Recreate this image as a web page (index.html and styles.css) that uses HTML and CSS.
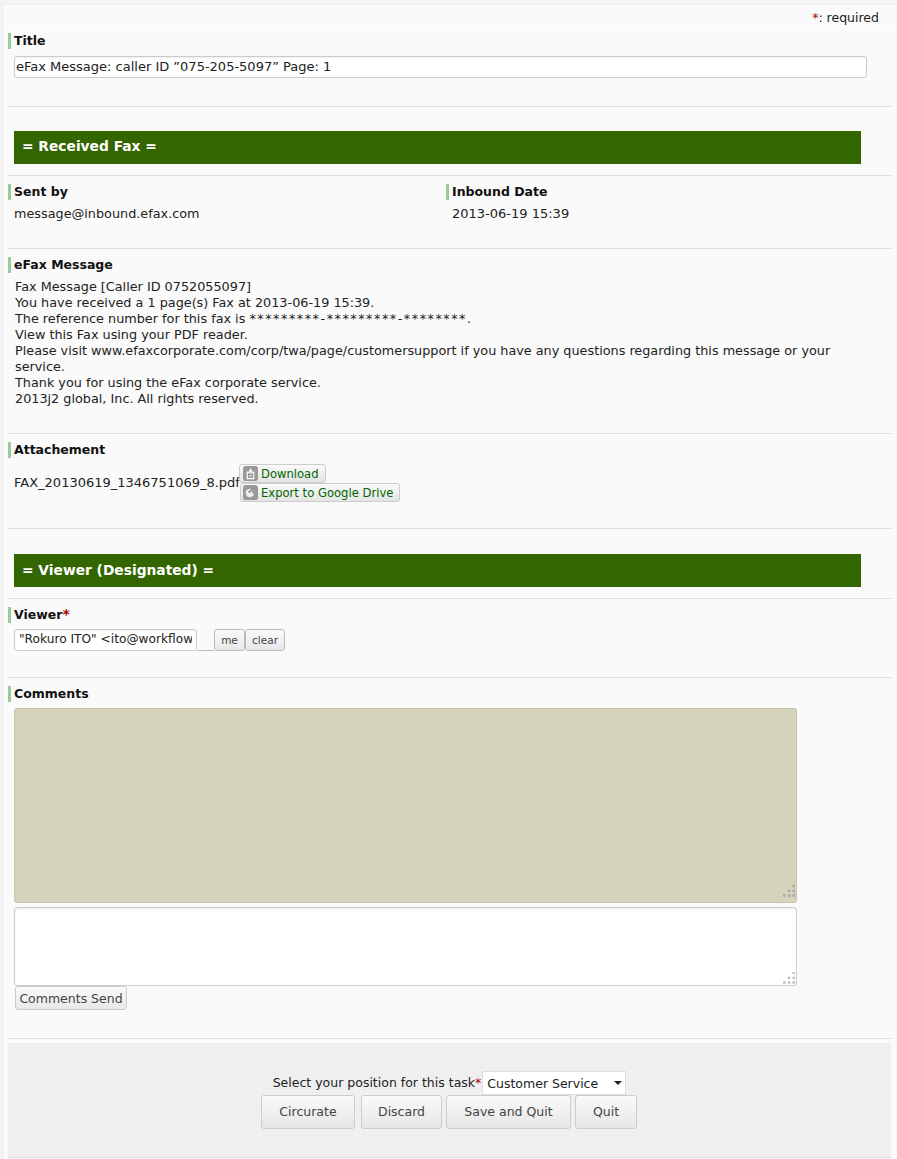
FILE: index.html
```html
<!DOCTYPE html>
<html lang="en">
<head>
  <meta charset="UTF-8" />
  <meta name="viewport" content="width=device-width, initial-scale=1.0"/>
  <title>eFax Message</title>
  <link rel="stylesheet" href="styles.css">
</head>
<body>
  <div class="page">
    <div class="required-note"><span class="req">*</span>: required</div>

    <div class="row row-title">
      <div class="label">Title</div>
      <input class="text-input title-input" type="text" value="eFax Message: caller ID ”075-205-5097” Page: 1" />
    </div>

    <div class="row row-heading">
      <div class="heading">= Received Fax =</div>
    </div>

    <div class="row row-sender">
      <div class="col">
        <div class="label">Sent by</div>
        <div class="value">message@inbound.efax.com</div>
      </div>
      <div class="col">
        <div class="label">Inbound Date</div>
        <div class="value date-value">2013-06-19 15:39</div>
      </div>
    </div>

    <div class="row row-message">
      <div class="label">eFax Message</div>
      <div class="message">
        Fax Message [Caller ID 0752055097]<br>
        You have received a 1 page(s) Fax at 2013-06-19 15:39.<br>
        The reference number for this fax is <span class="stars">*********-*********-********.</span><br>
        View this Fax using your PDF reader.<br>
        Please visit www.efaxcorporate.com/corp/twa/page/customersupport if you have any questions regarding this message or your service.<br>
        Thank you for using the eFax corporate service.<br>
        2013j2 global, Inc. All rights reserved.
      </div>
    </div>

    <div class="row row-attach">
      <div class="label">Attachement</div>
      <div class="attach">
        <span class="file-name">FAX_20130619_1346751069_8.pdf</span>
        <div class="attach-buttons">
          <a class="file-btn">
            <svg class="file-icon" viewBox="0 0 16 16"><rect width="16" height="16" rx="3" fill="#999"/><path d="M8 2.500v3M6.500 4.500L8 6l1.500-1.500" fill="none" stroke="#fff" stroke-width="1.200"/><path d="M4.500 6.500h2v1h3v-1h2v7h-7z" fill="none" stroke="#fff" stroke-width="1.200"/><path d="M6.500 10.500h3" stroke="#fff"/></svg>
            Download
          </a>
          <a class="file-btn btn-drive">
            <svg class="file-icon" viewBox="0 0 16 16"><rect width="16" height="16" rx="3" fill="#999"/><path d="M3 6.500c2-2.500 5-3 8-2L9 8l3 1.500c-1 2.500-3 3.500-5 3.500-2.500 0-4-2-4-4.500z" fill="#eee"/><path d="M6 8l5-4.500" stroke="#777" stroke-width="1.500"/></svg>
            Export to Google Drive
          </a>
        </div>
      </div>
    </div>

    <div class="row row-heading row-heading-viewer">
      <div class="heading">= Viewer (Designated) =</div>
    </div>

    <div class="row row-viewer">
      <div class="label">Viewer<span class="req">*</span></div>
      <div class="viewer">
        <input class="text-input viewer-input" type="text" value="&quot;Rokuro ITO&quot; &lt;ito@workflow-sample.com&gt;" />
        <span class="viewer-blank"></span>
        <button class="small-btn btn-me">me</button>
        <button class="small-btn btn-clear">clear</button>
      </div>
    </div>

    <div class="row row-comments">
      <div class="label">Comments</div>
      <div class="area-wrap">
        <textarea class="area area-log" readonly></textarea>
        <svg class="grip" viewBox="0 0 12 12"><path d="M9 0h2v2H9zM5 4h2v2H5zM9 4h2v2H9zM1 8h2v2H1zM5 8h2v2H5zM9 8h2v2H9z" fill="#a5a5a0"/></svg>
      </div>
      <div class="area-wrap">
        <textarea class="area area-new"></textarea>
        <svg class="grip" viewBox="0 0 12 12"><path d="M9 0h2v2H9zM5 4h2v2H5zM9 4h2v2H9zM1 8h2v2H1zM5 8h2v2H5zM9 8h2v2H9z" fill="#bbb"/></svg>
      </div>
      <button class="send-btn">Comments Send</button>
    </div>

    <div class="footer">
      <div class="position">
        Select your position for this task<span class="req">*</span><span class="select-wrap"><select class="position-select"><option>Customer Service</option></select></span>
      </div>
      <div class="actions">
        <button class="action-btn btn-circulate">Circurate</button>
        <button class="action-btn btn-discard">Discard</button>
        <button class="action-btn btn-save">Save and Quit</button>
        <button class="action-btn btn-quit">Quit</button>
      </div>
    </div>
  </div>
</body>
</html>
```

FILE: styles.css
```css
html, body {
  margin: 0;
  padding: 0;
}

body {
  background: #f4f4f4;
  color: #222;
  font-family: "DejaVu Sans", Verdana, sans-serif;
  font-size: 12.5px;
  line-height: 16px;
  padding: 4px 0 0 2px;
  height: 1159px;
  overflow: hidden;
  box-sizing: border-box;
}

.page {
  background: #fafafa;
  border-top: 1px solid #eee;
  border-left: 1px solid #eee;
  padding: 0 6px 0 5px;
  height: 1154px;
}

.req {
  color: #a00;
}

.required-note {
  height: 22px;
  padding: 5px 12px 0 0;
  box-sizing: border-box;
  text-align: right;
  border-bottom: 1px solid #fff;
  line-height: 16px;
}

.row {
  border-bottom: 1px solid #ddd;
  box-sizing: border-box;
}

.label {
  border-left: 3px solid #99cc99;
  padding-left: 3px;
  height: 16px;
  font-weight: bold;
  color: #111;
}

.label .req {
  font-size: 14px;
  line-height: 0;
}

.row-title {
  height: 80px;
  padding-top: 6px;
}

.text-input {
  font-family: inherit;
  font-size: inherit;
  color: #222;
  background: #fff;
  border: 1px solid #ccc;
  border-radius: 3px;
  box-shadow: inset 0 1px 2px #eee;
  box-sizing: border-box;
  outline: none;
}

.title-input {
  display: block;
  margin: 7px 0 0 6px;
  width: 853px;
  height: 22px;
  padding: 0 1px 2px;
  font-size: 13px;
}

.row-heading {
  padding: 24px 0 11px 6px;
  height: 69px;
}

.row-heading-viewer {
  padding-top: 25px;
  height: 70px;
}

.heading {
  background: #336600;
  color: #fff;
  font-size: 13.8px;
  font-weight: bold;
  height: 33px;
  line-height: 31px;
  padding-left: 8px;
  width: 847px;
  box-sizing: border-box;
}

.row-heading-viewer .heading {
  line-height: 33px;
}

.row-sender {
  display: flex;
  height: 73px;
  padding-top: 8px;
}

.col {
  width: 438px;
}

.value {
  margin: 6px 0 0 6px;
  font-size: 12.8px;
}

.date-value {
  font-size: 13px;
}

.row-message {
  height: 185px;
  padding-top: 8px;
}

.message {
  margin: 6px 50px 0 7px;
  font-size: 12.8px;
}

.stars {
  letter-spacing: 1.5px;
}

.row-attach {
  height: 95px;
  padding-top: 8px;
}

.attach {
  display: flex;
  align-items: center;
  margin: 6px 0 0 6px;
}

.file-name {
  font-size: 13px;
}

.attach-buttons {
  display: flex;
  flex-direction: column;
  align-items: flex-start;
  margin-left: -1px;
}

.file-btn {
  display: flex;
  align-items: center;
  gap: 3px;
  height: 19px;
  padding: 0 6px 0 3px;
  box-sizing: border-box;
  font-size: 11.6px;
  color: #060;
  background: linear-gradient(#fafafa, #e4e4e4);
  border: 1px solid #ccc;
  border-radius: 3px;
}

.btn-drive {
  margin-left: 1px;
  padding-left: 2px;
}

.file-icon {
  width: 15px;
  height: 15px;
}

.row-viewer {
  height: 79px;
  padding-top: 8px;
}

.viewer {
  display: flex;
  align-items: flex-end;
  margin: 6px 0 0 6px;
  height: 22px;
}

.viewer-input {
  width: 183px;
  height: 22px;
  padding: 0 4px 2px;
  font-size: 12.2px;
}

.viewer-blank {
  width: 17px;
  height: 1px;
  background: #bbc;
}

.small-btn {
  font-family: inherit;
  font-size: 10.5px;
  color: #444;
  height: 22px;
  padding: 0;
  background: linear-gradient(#fafafa, #e8e8e8);
  border: 1px solid #bbb;
  border-radius: 3px;
}

.btn-me { width: 31px; }
.btn-clear { width: 40px; }

.row-comments {
  height: 361px;
  padding-top: 8px;
}

.area-wrap {
  position: relative;
  width: 783px;
  margin-left: 6px;
}

.area {
  display: block;
  width: 100%;
  box-sizing: border-box;
  resize: none;
  outline: none;
  border-radius: 3px;
}

.area-log {
  margin-top: 6px;
  height: 195px;
  background: #d5d3bc;
  border: 1px solid #c6c6a8;
  margin-bottom: 4px;
}

.area-new {
  height: 79px;
  background: #fff;
  border: 1px solid #ccc;
  box-shadow: inset 0 1px 2px #eee;
}

.grip {
  position: absolute;
  right: 1px;
  bottom: 0;
  width: 14px;
  height: 14px;
}

.area-log + .grip {
  bottom: 4px;
}

.send-btn {
  display: block;
  margin: 0 0 0 7px;
  width: 112px;
  height: 24px;
  padding: 0;
  font-family: inherit;
  font-size: 12.5px;
  color: #444;
  background: linear-gradient(#fafafa, #e8e8e8);
  border: 1px solid #ccc;
  border-radius: 3px;
}

.footer {
  margin-top: 4px;
  background: #efefef;
  border-bottom: 1px solid #ddd;
  height: 115px;
  box-sizing: border-box;
  padding-top: 28px;
  text-align: center;
}

.position {
  display: flex;
  justify-content: center;
  align-items: center;
  height: 24px;
}

.select-wrap {
  position: relative;
  display: block;
  margin-left: 1px;
}

.select-wrap::after {
  content: "";
  position: absolute;
  right: 4px;
  top: 10px;
  border: 4px solid transparent;
  border-top-color: #222;
  border-bottom: 0;
}

.position-select {
  display: block;
  appearance: none;
  width: 144px;
  height: 24px;
  padding: 0 4px;
  font-family: inherit;
  font-size: inherit;
  color: #222;
  background: #fff;
  border: 1px solid #ddd;
  border-radius: 0;
}

.actions {
  display: flex;
  justify-content: center;
  gap: 5px;
  padding-right: 1px;
}

.action-btn {
  height: 34px;
  padding: 0 0 1px;
  font-family: inherit;
  font-size: 12.5px;
  color: #444;
  background: linear-gradient(#fafafa, #e6e6e6);
  border: 1px solid #ccc;
  border-radius: 3px;
}

.btn-circulate { width: 94px; margin-right: 1px; }
.btn-discard { width: 81px; margin-right: -1px; }
.btn-save { width: 125px; margin-right: -1px; }
.btn-quit { width: 62px; }
```
